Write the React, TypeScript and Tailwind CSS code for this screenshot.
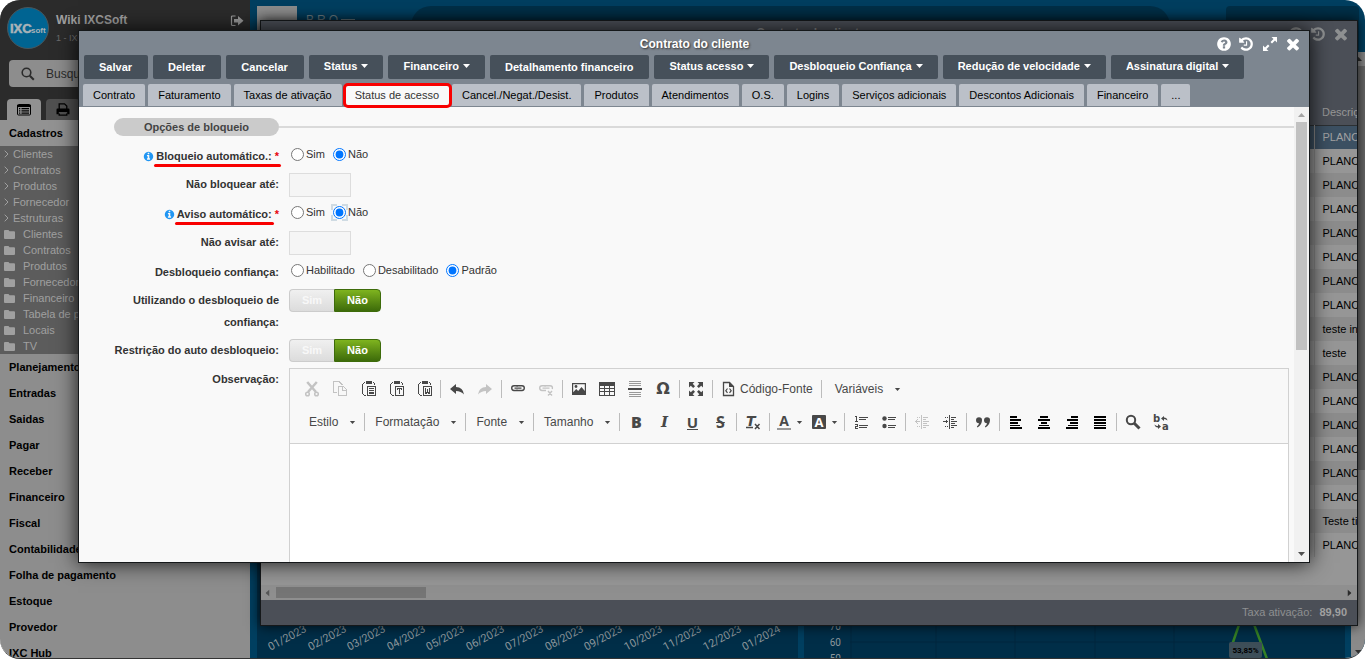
import React from "react";

type Kids = { children?: React.ReactNode };

const FA = {
  question:
    "M1024 1376v-192q0-14-9-23t-23-9h-192q-14 0-23 9t-9 23v192q0 14 9 23t23 9h192q14 0 23-9t9-23zm256-672q0-88-55.5-163t-138.5-116-170-41q-243 0-371 213-15 24 8 42l132 100q7 6 19 6 16 0 25-12 53-68 86-92 34-24 86-24 48 0 85.5 26t37.5 59q0 38-20 61t-68 45q-63 28-115.5 86.5t-52.5 125.5v36q0 14 9 23t23 9h192q14 0 23-9t9-23q0-19 21.5-49.5t54.5-49.5q32-18 49-28.5t46-35 44.5-48 28-60.5 12.5-81zm384 192q0 209-103 385.5t-279.5 279.5-385.5 103-385.5-103-279.5-279.5-103-385.5 103-385.5 279.5-279.5 385.5-103 385.5 103 279.5 279.5 103 385.5z",
  history:
    "M1664 896q0 156-61 298t-164 245-245 164-298 61q-172 0-327-72.5t-264-204.5q-7-10-6.5-22.5t8.5-20.5l137-138q10-9 25-9 16 2 23 12 73 95 179 147t225 52q104 0 198.5-40.5t163.5-109.5 109.5-163.5 40.5-198.5-40.5-198.5-109.5-163.5-163.5-109.5-198.5-40.5q-98 0-188 35.5t-160 101.5l137 138q31 30 14 69-17 40-59 40h-448q-26 0-45-19t-19-45v-448q0-42 40-59 39-17 69 14l130 129q107-101 244.5-156.5t284.5-55.5q156 0 298 61t245 164 164 245 61 298zm-640-288v448q0 14-9 23t-23 9h-320q-14 0-23-9t-9-23v-64q0-14 9-23t23-9h224v-352q0-14 9-23t23-9h64q14 0 23 9t9 23z",
  times:
    "M1490 1322q0 40-28 68l-136 136q-28 28-68 28t-68-28l-294-294-294 294q-28 28-68 28t-68-28l-136-136q-28-28-28-68t28-68l294-294-294-294q-28-28-28-68t28-68l136-136q28-28 68-28t68 28l294 294 294-294q28-28 68-28t68 28l136 136q28 28 28 68t-28 68l-294 294 294 294q28 28 28 68z",
  info:
    "M1152 1376v-160q0-14-9-23t-23-9h-96v-512q0-14-9-23t-23-9h-320q-14 0-23 9t-9 23v160q0 14 9 23t23 9h96v320h-96q-14 0-23 9t-9 23v160q0 14 9 23t23 9h448q14 0 23-9t9-23zm-128-896v-160q0-14-9-23t-23-9h-192q-14 0-23 9t-9 23v160q0 14 9 23t23 9h192q14 0 23-9t9-23zm640 416q0 209-103 385.5t-279.5 279.5-385.5 103-385.5-103-279.5-279.5-103-385.5 103-385.5 279.5-279.5 385.5-103 385.5 103 279.5 279.5 103 385.5z",
};

function Fa({ d, className }: { d: string; className: string }) {
  return (
    <svg viewBox="0 0 1792 1792" fill="currentColor" className={className} aria-hidden="true">
      <path d={d} />
    </svg>
  );
}

function WindowControls({ expand }: { expand?: boolean }) {
  return (
    <div className="flex items-center gap-1.5">
      <button type="button" aria-label="Ajuda"><Fa d={FA.question} className="h-4 w-4" /></button>
      <button type="button" aria-label="Histórico"><Fa d={FA.history} className="h-4 w-4" /></button>
      {expand && (
        <button type="button" aria-label="Expandir" className="ml-0.5">
          <svg viewBox="0 0 16 16" className="h-4 w-4" fill="currentColor" aria-hidden="true">
            <path d="M9.500 1h5.500v5.500l-2-2-3 3-1.500-1.500 3-3zM6.500 15h-5.500v-5.500l2 2 3-3 1.500 1.500-3 3z" />
          </svg>
        </button>
      )}
      <button type="button" aria-label="Fechar"><Fa d={FA.times} className="h-[18px] w-[18px]" /></button>
    </div>
  );
}

function Caret({ className = "" }: { className?: string }) {
  return (
    <svg viewBox="0 0 7 4" className={`h-1 w-[7px] ${className}`} fill="currentColor" aria-hidden="true">
      <path d="M0 0h7L3.500 4z" />
    </svg>
  );
}

/* ---------- Sidebar ---------- */

const shortcuts = ["Clientes", "Contratos", "Produtos", "Fornecedor", "Estruturas"];
const folders = ["Clientes", "Contratos", "Produtos", "Fornecedor", "Financeiro", "Tabela de preço", "Locais", "TV"];
const sections = [
  "Planejamento", "Entradas", "Saidas", "Pagar", "Receber", "Financeiro", "Fiscal",
  "Contabilidade", "Folha de pagamento", "Estoque", "Provedor", "IXC Hub",
];

function Sidebar() {
  return (
    <aside className="flex w-[250px] shrink-0 flex-col overflow-hidden bg-[#8d8d8d]">
      <div className="bg-[#2b2b2b]">
        <div className="flex h-[60px] pt-[7px] pl-[7px]">
          <svg viewBox="0 0 42 42" className="h-[42px] w-[42px] shrink-0" role="img" aria-label="IXC Soft">
            <circle cx="21" cy="21" r="20.500" fill="#006492" stroke="#4a565c" />
            <text x="3" y="26" fontFamily="Liberation Sans" fontWeight="700" fontSize="13" fill="#a9b3b8" stroke="#a9b3b8" strokeWidth="0.500">IXC</text>
            <text x="24" y="26" fontFamily="Liberation Sans" fontWeight="700" fontSize="8" fill="#a9b3b8">soft</text>
          </svg>
          <div className="flex-1 pl-[7px]">
            <p className="mt-[5px] text-[12px] leading-4 font-bold text-[#a0a0a0]">Wiki IXCSoft</p>
            <p className="mt-1 text-[9px] leading-3 text-[#6c6c6c]">1 - IXCSoft</p>
          </div>
          <button type="button" aria-label="Sair" className="mt-[7px] mr-1.5 h-3.5 text-[#9a9a9a]">
            <svg viewBox="0 0 14 14" className="h-3.5 w-3.5" aria-hidden="true">
              <path d="M5.500 2H2.500Q1.500 2 1.500 3v7.500q0 1 1 1h3" fill="none" stroke="currentColor" strokeWidth="1.200" />
              <path d="M4 5h4V2l5.500 4.800L8 11.500v-3H4z" fill="currentColor" />
            </svg>
          </button>
        </div>
        <div className="mx-[9px] flex h-[27px] items-center rounded bg-[#8d8d8d] pl-3">
          <svg viewBox="0 0 14 14" className="h-3.5 w-3.5" fill="none" stroke="#2b2b2b" aria-hidden="true">
            <circle cx="5.500" cy="5.500" r="4.300" strokeWidth="1.600" />
            <path d="M8.800 8.800l4 4" strokeWidth="2" />
          </svg>
          <input aria-label="Buscar" placeholder="Busque" className="ml-[11px] w-32 bg-transparent text-[12px] leading-4 outline-none placeholder:text-[#2b2b2b]" />
        </div>
        <div className="flex gap-[5px] pt-3 pl-[7px]">
          <button type="button" aria-label="Menu" className="flex h-[21px] w-[34px] items-center justify-center rounded-t-sm bg-[#919191] text-black">
            <svg viewBox="0 0 14 12" className="h-3 w-3.5" aria-hidden="true">
              <rect x=".5" y=".5" width="13" height="10.500" rx="1" fill="none" stroke="currentColor" />
              <path d="M0 1h14v2H0zM2 4h1.300v1.200H2zM4.500 4H12v1.200H4.500zM2 6.300h1.300v1.200H2zM4.500 6.300H12v1.200H4.500zM2 8.500h1.300v1.200H2zM4.500 8.500H12v1.200H4.500z" fill="currentColor" />
            </svg>
          </button>
          <button type="button" aria-label="Imprimir" className="flex h-[21px] w-[34px] items-center justify-center rounded-t-sm bg-[#505050] text-black">
            <svg viewBox="0 0 14 13" className="h-[13px] w-3.5" aria-hidden="true">
              <path d="M3.200 6V.8h5.300l2.300 2.300V6M3.200 10.500v1.700h7.600v-1.700" fill="none" stroke="currentColor" strokeWidth="1.300" />
              <path d="M1.500 5.500h11q1 0 1 1.200v4.600h-2.300V9H2.800v2.300H.5V6.700q0-1.200 1-1.200z" fill="currentColor" />
            </svg>
          </button>
        </div>
      </div>
      <h2 className="h-[26px] shrink-0 bg-[#929292] pl-[9px] text-[11px] leading-[26px] font-bold text-black">Cadastros</h2>
      <ul className="shrink-0 bg-[#5c5c5c] text-[11px] leading-4 text-[#a0a0a0]">
        {shortcuts.map((s) => (
          <li key={s} className="flex items-center">
            <svg viewBox="0 0 5 8" className="ml-1 h-2 w-[5px]" fill="none" stroke="currentColor" aria-hidden="true">
              <path d="M.7.7L4 4 .7 7.300" />
            </svg>
            <a href="#" className="ml-1">{s}</a>
          </li>
        ))}
        {folders.map((s) => (
          <li key={s} className="flex items-center">
            <svg viewBox="0 0 11 9" className="ml-1 h-[9px] w-[11px] shrink-0" fill="currentColor" aria-hidden="true">
              <path d="M0 1q0-1 1-1h3.500l1 1.300H10q1 0 1 1V8q0 1-1 1H1Q0 9 0 8z" />
            </svg>
            <a href="#" className="ml-2 whitespace-nowrap">{s}</a>
          </li>
        ))}
      </ul>
      <ul className="text-[11px] leading-[26px] font-bold text-black">
        {sections.map((s) => (
          <li key={s} className="pl-[9px]"><a href="#">{s}</a></li>
        ))}
      </ul>
    </aside>
  );
}

/* ---------- Dashboard behind the windows ---------- */

const months = ["01/2023", "02/2023", "03/2023", "04/2023", "05/2023", "06/2023", "07/2023", "08/2023", "09/2023", "10/2023", "11/2023", "12/2023", "01/2024"];

function Dashboard() {
  return (
    <main className="flex min-w-0 flex-1 flex-col bg-[#003f60]">
      <div className="flex h-[52px] shrink-0 items-start pt-1.5 pr-1.5 pl-[7px]">
        <div className="h-8 w-10 bg-[#8d8d8d]" />
        <div className="ml-[9px] flex w-[105px] pt-1.5 text-[12px] leading-4 tracking-[3px] text-[#6f8088]">
          <span>BRO</span>
          <span className="mt-[7px] h-px w-3.5 bg-[#6f8088]" />
        </div>
        <div className="h-11 min-w-0 flex-[7] rounded-t-[20px] bg-[#002f47]" />
        <div className="ml-14 h-11 w-[133px] rounded-t bg-[#002f47]" />
      </div>
      <div className="flex min-h-0 flex-1">
        <div className="grid min-w-0 flex-1 grid-cols-2 gap-1.5 pr-1.5 pl-[7px]">
          <section className="flex flex-col justify-end bg-[#002e48]">
            <div className="grid h-[26px] grid-cols-13 pr-3.5 pl-[13px] text-[#8d979c]">
              {months.map((m) => (
                <span key={m} className="-rotate-[28deg] font-[Roboto] text-[11px] leading-3 whitespace-nowrap">{m}</span>
              ))}
            </div>
          </section>
          <section className="flex min-w-0 items-end overflow-hidden bg-[#002e48]">
            <div className="-mb-[9px] w-[46px] pr-[9px] text-right font-[Roboto] text-[10px] leading-4 text-[#8d979c]">
              <p>70</p>
              <p>60</p>
              <p>50</p>
            </div>
            <svg className="h-9 min-w-0 flex-1" aria-hidden="true">
              <path d="M0 20H600M1 0V36M86 0V36M165 0V36M245 0V36M324 0V36M404 0V36" stroke="#00273e" fill="none" />
            </svg>
            <svg viewBox="0 0 116 36" className="h-9 w-[116px]" aria-hidden="true">
              <path d="M2 26L12 -3M23 -3L38 37" stroke="#358025" strokeWidth="2.500" fill="none" />
              <rect x="0" y="20" width="33" height="16" rx="2" fill="#3d4e58" />
              <text x="16.500" y="31" textAnchor="middle" fontFamily="Roboto" fontSize="8" fontWeight="700" fill="#000">53,85%</text>
            </svg>
          </section>
        </div>
        <div className="flex w-3.5 flex-col items-center bg-[#8a8a8a] text-[#2e2e2e]" aria-hidden="true">
          <Caret className="my-[5px] rotate-180" />
          <div className="h-2/3 w-full bg-[#6a6a6a]" />
          <Caret className="mt-auto mb-1" />
        </div>
      </div>
    </main>
  );
}

const plans = [
  "PLANO", "PLANO", "PLANO", "PLANO", "PLANO", "PLANO", "PLANO", "PLANO", "teste internet", "teste",
  "PLANO", "PLANO", "PLANO", "PLANO", "PLANO", "PLANO", "Teste tipo", "PLANO",
];

function ContractListWindow() {
  return (
    <section className="absolute top-5 right-[7px] bottom-8 left-[260px] flex flex-col border border-[#15181a] bg-[#969696] shadow-[0_0_12px_rgba(0,0,0,0.8)]">
      <div className="flex h-[79px] shrink-0 items-start bg-[#4b4f57] pt-1 pr-[7px] text-[#8e9091]">
        <h2 className="ml-[73px] flex-1 text-center text-[12px] leading-4 font-bold">Contrato do cliente</h2>
        <WindowControls />
      </div>
      <div className="min-h-0 flex-1 overflow-hidden">
        <table className="w-full table-fixed border-collapse text-[11px]">
          <colgroup>
            <col />
            <col className="w-[43px]" />
          </colgroup>
          <thead>
            <tr className="h-[25px] border-b border-[#2c3033] bg-[#4b4f57] text-left text-[#989898]">
              <th />
              <th className="overflow-hidden pl-2 font-normal whitespace-nowrap">Descrição</th>
            </tr>
          </thead>
          <tbody>
            {plans.map((p, i) => (
              <tr key={i} className={`h-6 ${i === 0 ? "bg-[#3c5062] text-[#a2a2a2]" : i % 2 ? "bg-[#969696] text-black" : "bg-[#8c8c8c] text-black"}`}>
                <td className="border-r border-[#858585]" />
                <td className="overflow-hidden pl-2 whitespace-nowrap">{p}</td>
              </tr>
            ))}
          </tbody>
        </table>
      </div>
      <div className="flex h-[15px] shrink-0 items-center bg-[#8f8f8f] pr-1 pl-[3px] text-[#2c2c2c]" aria-hidden="true">
        <Caret className="rotate-90 text-[#555]" />
        <div className="ml-[5px] h-[11px] w-[150px] bg-[#757575]" />
        <Caret className="ml-auto -rotate-90" />
      </div>
      <p className="h-[25px] shrink-0 bg-[#4b4f57] pr-2.5 text-right text-[11px] leading-6 text-[#8e9091]">
        Taxa ativação: <b className="ml-1 text-[#a0a0a0]">89,90</b>
      </p>
    </section>
  );
}

/* ---------- Contract window ---------- */

const actions: [string, boolean][] = [
  ["Salvar", false], ["Deletar", false], ["Cancelar", false], ["Status", true], ["Financeiro", true],
  ["Detalhamento financeiro", false], ["Status acesso", true], ["Desbloqueio Confiança", true],
  ["Redução de velocidade", true], ["Assinatura digital", true],
];
const tabs = [
  "Contrato", "Faturamento", "Taxas de ativação", "Status de acesso", "Cancel./Negat./Desist.", "Produtos",
  "Atendimentos", "O.S.", "Logins", "Serviços adicionais", "Descontos Adicionais", "Financeiro", "...",
];

function FieldRow({ label, htmlFor, nudge, children }: Kids & { label: React.ReactNode; htmlFor?: string; nudge?: boolean }) {
  return (
    <div className="mb-1.5 flex min-h-[23px] items-start gap-2.5">
      <label htmlFor={htmlFor} className={`w-[170px] shrink-0 text-right text-[11px] leading-[22px] font-bold text-[#333] ${nudge ? "pt-px" : ""}`}>
        {label}
      </label>
      {children}
    </div>
  );
}

function Radios({ name, options, selected, focused }: { name: string; options: string[]; selected: string; focused?: boolean }) {
  return (
    <div role="radiogroup" className="flex h-5 items-center gap-2 pl-0.5 text-[11px] leading-4 text-[#333]">
      {options.map((o) => (
        <label key={o} className="relative flex items-center gap-0.5">
          <input type="radio" name={name} defaultChecked={o === selected} className="m-0 h-[13px] w-[13px]" />
          {focused && o === selected && (
            <svg viewBox="0 0 17 17" className="absolute top-0 -left-0.5 h-[17px] w-[17px]" fill="none" stroke="#cfdbe3" strokeWidth="2" aria-hidden="true">
              <path d="M1 6V1H6M11 1h5v5M16 11v5h-5M6 16H1v-5" />
            </svg>
          )}
          {o}
        </label>
      ))}
    </div>
  );
}

function Toggle({ name }: { name: string }) {
  return (
    <div role="group" aria-label={name} className="flex h-[23px] text-[11px] font-bold">
      <button type="button" className="w-[45px] rounded-l-sm border border-r-0 border-[#ccc] bg-linear-to-b from-[#f0f0f0] to-[#dcdcdc] text-[#f8f8f8]">Sim</button>
      <button type="button" className="w-[47px] rounded-r-sm border border-[#3d6b0a] bg-linear-to-b from-[#7fb41f] to-[#3d6b0a] text-white">Não</button>
    </div>
  );
}

function HelpLabel({ text, underlineStar }: { text: string; underlineStar?: boolean }) {
  const bar = <span className="absolute -right-0.5 -bottom-1 -left-0.5 h-[3px] rounded-full bg-[#f80000]" />;
  return (
    <span className="flex h-[22px] items-center justify-end leading-[14px]">
      <Fa d={FA.info} className="mr-0.5 h-[11px] w-[11px] text-[#2196f3]" />
      <span className="relative flex">
        <span className="relative">{text}{!underlineStar && bar}</span>
        <span className="ml-[3px] text-red-600">*</span>
        {underlineStar && bar}
      </span>
    </span>
  );
}

/* ---------- Rich text editor ---------- */

function Ico({ children, soft }: Kids & { soft?: boolean }) {
  return (
    <svg viewBox="0 0 16 16" className="h-4 w-4" fill="currentColor" shapeRendering={soft ? "auto" : "crispEdges"} aria-hidden="true">
      {children}
    </svg>
  );
}

function Tool({ name, off, dark, wide, children }: Kids & { name: string; off?: boolean; dark?: boolean; wide?: boolean }) {
  return (
    <button type="button" aria-label={name} disabled={off} className={`flex h-7 shrink-0 items-center justify-center ${wide ? "w-[35px] gap-1" : "w-7"} ${off ? "text-[#c3c3c3]" : dark ? "text-black" : "text-[#484848]"}`}>
      {children}
    </button>
  );
}

function Sep() {
  return <span className="mx-0.5 h-[18px] w-px shrink-0 bg-[#bcbcbc]" />;
}

function Combo({ label }: { label: string }) {
  return (
    <button type="button" className="flex h-7 items-center gap-[11px] pr-1.5 pl-2 text-[12px] text-[#484848]">
      {label}
      <Caret className="h-[3px]" />
    </button>
  );
}

const clip = "M6 0h6v3H6zM4 1h1v1H4zM3 2h1v1H3zM2 3h1v10H2zM3 13h1v1H3zM4 14h2v1H4zM13 1h1v1h-1zM14 2h1v2h-1zM7 5h9v10H7zM8 6v8h7V6z";

function Toolbar() {
  return (
    <div className="border-b border-[#d1d1d1] bg-[#f8f8f8] pt-1.5 pb-[7px] pl-2">
      <div className="flex items-center">
        <Tool name="Recortar" off>
          <Ico soft>
            <path d="M3.200 1L12 11M12.800 1L4 11" stroke="currentColor" strokeWidth="2.500" fill="none" />
            <circle cx="3.500" cy="13" r="1.800" fill="none" stroke="currentColor" strokeWidth="1.500" />
            <circle cx="12.500" cy="13" r="1.800" fill="none" stroke="currentColor" strokeWidth="1.500" />
          </Ico>
        </Tool>
        <Tool name="Copiar" off>
          <Ico>
            <path d="M5 11.500H1.500V.5H7L10.500 4" fill="none" stroke="currentColor" />
            <path d="M6.500 5.500h5l3 3v6h-8zM10.500 5.500v4h4" fill="none" stroke="currentColor" />
          </Ico>
        </Tool>
        <Tool name="Colar">
          <Ico><path fillRule="evenodd" d={clip} /><path d="M9 7h5v1H9zM9 9h5v1H9zM9 11h5v1H9zM9 12h5v1H9z" /></Ico>
        </Tool>
        <Tool name="Colar como texto">
          <Ico><path fillRule="evenodd" d={clip} /><path d="M9 7h5v2h-1V8h-1v5h-1V8h-1v1H9z" /></Ico>
        </Tool>
        <Tool name="Colar do Word">
          <Ico><path fillRule="evenodd" d={clip} /><path d="M9 7h1v4h1V8h1v3h1V7h1v6h-2v-1h-1v1H9z" /></Ico>
        </Tool>
        <Sep />
        <Tool name="Desfazer">
          <Ico soft><path d="M7 3v3q7 .2 8 7.500Q12 10 7 10v3L1 8z" /></Ico>
        </Tool>
        <Tool name="Refazer" off>
          <Ico soft><path d="M9 3v3q-7 .2-8 7.500Q4 10 9 10v3l6-5z" /></Ico>
        </Tool>
        <Sep />
        <Tool name="Link">
          <Ico soft>
            <path d="M9 5.500V5Q9 4.700 8 4.700H4Q1.700 4.700 1.700 7T4 9.500h4q1 0 1-.8M7 8.500V9q0 .5 1 .5h4q2.300 0 2.300-2.400T12 4.700H8q-1 0-1 1M4.500 7.100h7" fill="none" stroke="currentColor" strokeWidth="1.400" />
          </Ico>
        </Tool>
        <Tool name="Remover link" off>
          <Ico soft>
            <path d="M9 5.500V5Q9 4.700 8 4.700H4Q1.700 4.700 1.700 7T4 9.500h4M14.300 8q.6-3.300-2.300-3.300H8q-1 0-1 1M4.500 7.100h7M10 10l4 4.500M14 10l-4 4.500" fill="none" stroke="currentColor" strokeWidth="1.400" />
          </Ico>
        </Tool>
        <Sep />
        <Tool name="Imagem">
          <Ico soft><path fillRule="evenodd" d="M1 2h14v12H1zM2.200 3.200v8l3-3.200 2 2 3.300-4 3.300 4V3.200z" /><circle cx="5" cy="5.500" r="1.400" /></Ico>
        </Tool>
        <Tool name="Tabela">
          <Ico><path fillRule="evenodd" d="M0 1h16v14H0zM1 5v2h4V5zM6 5v2h4V5zM11 5v2h4V5zM1 8v2h4V8zM6 8v2h4V8zM11 8v2h4V8zM1 11v3h4v-3zM6 11v3h4v-3zM11 11v3h4v-3z" /></Ico>
        </Tool>
        <Tool name="Linha horizontal">
          <Ico><path d="M2 0h12v1H2zM2 2h12v1H2zM2 4h12v1H2zM2 11h12v1H2zM2 13h12v1H2zM2 15h12v1H2z" fill="#999" /><path d="M1 7h14v2H1z" /></Ico>
        </Tool>
        <Tool name="Caractere especial"><span className="font-['DejaVu_Sans'] text-[16px] leading-4 font-bold">Ω</span></Tool>
        <Sep />
        <Tool name="Maximizar">
          <Ico soft>
            <path d="M1 1h5.500L4.700 2.800 7 5.200 5.200 7 2.800 4.700 1 6.500zM15 1v5.500l-1.800-1.800L10.800 7 9 5.200l2.300-2.400L9.500 1zM1 15V9.500l1.800 1.800L5.200 9 7 10.800l-2.300 2.400L6.500 15zM15 15H9.500l1.800-1.800L9 10.800 10.800 9l2.400 2.300L15 9.500z" />
          </Ico>
        </Tool>
        <Sep />
        <button type="button" className="flex h-7 items-center gap-1 pr-1.5 pl-[5px] text-[12px] text-[#484848]">
          <Ico soft>
            <path d="M3.500 1.500h6l4 4v9H3.500z" fill="none" stroke="currentColor" strokeWidth="1.300" />
            <path d="M9 1v5h5z" />
            <path d="M7.500 7.500L5.800 9.700l1.700 2.200M9.500 7.500l1.700 2.200-1.700 2.200" fill="none" stroke="currentColor" strokeWidth="1.200" />
          </Ico>
          Código-Fonte
        </button>
        <Sep />
        <span className="w-[3px]" />
        <Combo label="Variáveis" />
      </div>
      <div className="mt-[5px] flex items-center pl-[3px]">
        <Combo label="Estilo" /><Sep />
        <Combo label="Formatação" /><Sep />
        <Combo label="Fonte" /><Sep />
        <Combo label="Tamanho" /><Sep />
        <Tool name="Negrito"><span className="font-['Open_Sans'] text-[16px] font-extrabold">B</span></Tool>
        <Tool name="Itálico"><span className="font-['DejaVu_Serif'] text-[15px] font-bold italic">I</span></Tool>
        <Tool name="Sublinhado"><span className="border-b border-current font-['Open_Sans'] text-[15px] leading-[14px] font-bold">U</span></Tool>
        <Tool name="Tachado"><span className="font-['Open_Sans'] text-[16px] font-bold line-through">S</span></Tool>
        <Sep />
        <Tool name="Remover formatação">
          <Ico soft>
            <text x="1" y="12" fontFamily="DejaVu Sans" fontWeight="700" fontStyle="italic" fontSize="14">T</text>
            <path d="M1 13.500h7M10 10l4.500 5M14.500 10L10 15" stroke="currentColor" strokeWidth="1.500" />
          </Ico>
        </Tool>
        <Sep />
        <Tool name="Cor do texto" wide>
          <Ico soft><text x="8" y="11.500" textAnchor="middle" fontFamily="Open Sans" fontWeight="700" fontSize="14">A</text><path d="M1 14h14v2H1z" fill="#999" /></Ico>
          <Caret className="h-[3px]" />
        </Tool>
        <Tool name="Cor de fundo" wide>
          <Ico soft><rect x="1" y="1" width="14" height="14" rx="1" /><text x="8" y="12.500" textAnchor="middle" fontFamily="Open Sans" fontWeight="700" fontSize="13" fill="#fff">A</text></Ico>
          <Caret className="h-[3px]" />
        </Tool>
        <Sep />
        <Tool name="Lista numerada">
          <Ico>
            <path d="M6 3h9v1H6zM6 5h7v1H6zM6 11h9v1H6zM6 13h8v1H6z" />
            <path d="M2 2h2v5h1v1H2V7h1V3H2zM2 10h3v3H3v1h2v1H2v-3h2v-1H2z" />
          </Ico>
        </Tool>
        <Tool name="Lista com marcadores">
          <Ico soft><circle cx="3.500" cy="4.500" r="2.200" /><circle cx="3.500" cy="12" r="2.200" /><path d="M7 3h8v1H7zM7 5h7v1H7zM7 11h8v1H7zM7 13h7v1H7z" /></Ico>
        </Tool>
        <Sep />
        <Tool name="Diminuir recuo" off>
          <Ico>
            <path d="M7 1h1v14H7zM9 3h5v1H9zM9 5h3v1H9zM9 7h6v1H9zM9 9h4v1H9zM9 11h6v1H9zM9 13h3v1H9zM1 7h5v1H1zM2 6h1v3H2zM3 5h1v1H3zM3 9h1v1H3zM3 3h1v1H3zM5 3h1v1H5zM3 12h1v1H3zM5 12h1v1H5z" />
          </Ico>
        </Tool>
        <Tool name="Aumentar recuo">
          <Ico>
            <path d="M7 1h1v14H7zM9 3h5v1H9zM9 5h3v1H9zM9 7h6v1H9zM9 9h4v1H9zM9 11h6v1H9zM9 13h3v1H9zM1 7h5v1H1zM4 6h1v3H4zM3 3h1v1H3zM5 3h1v1H5zM3 12h1v1H3zM5 12h1v1H5z" />
          </Ico>
        </Tool>
        <Sep />
        <Tool name="Citação">
          <Ico soft>
            <path d="M7 6q0 5-4.500 7.500l-.6-1Q4 10.800 4 9.300 1 9 1 6.200 1 3.300 4 3.300 7 3.300 7 6zM15 6q0 5-4.500 7.500l-.6-1Q12 10.800 12 9.300 9 9 9 6.200 9 3.300 12 3.300 15 3.300 15 6z" />
          </Ico>
        </Tool>
        <Sep />
        <Tool name="Alinhar à esquerda" dark><Ico><path d="M2 2h7v2H2zM2 5h11v2H2zM2 8h8v2H2zM2 10h8v1H2zM2 11h9v1H2zM2 13h12v1H2z" fill="none" /><path d="M2 2h7v2H2zM2 5h11v2H2zM2 8h8v2H2zM2 11h10v1H2zM2 13h12v2H2z" /></Ico></Tool>
        <Tool name="Centralizar" dark><Ico><path d="M4 2h8v2H4zM2 5h12v2H2zM5 8h6v2H5zM3 11h10v1H3zM2 13h12v2H2z" /></Ico></Tool>
        <Tool name="Alinhar à direita" dark><Ico><path d="M7 2h7v2H7zM3 5h11v2H3zM6 8h8v2H6zM4 11h10v1H4zM2 13h12v2H2z" /></Ico></Tool>
        <Tool name="Justificar" dark><Ico><path d="M2 2h12v2H2zM2 5h12v2H2zM2 8h12v2H2zM2 11h12v1H2zM2 13h12v2H2z" /></Ico></Tool>
        <Sep />
        <Tool name="Localizar">
          <Ico soft>
            <circle cx="6" cy="6" r="4.200" fill="none" stroke="currentColor" strokeWidth="2" />
            <path d="M9 9l5.500 5.500" stroke="currentColor" strokeWidth="3" />
          </Ico>
        </Tool>
        <Tool name="Substituir">
          <Ico soft>
            <text x="0" y="8" fontFamily="DejaVu Sans" fontWeight="700" fontSize="10">b</text>
            <text x="9" y="16" fontFamily="DejaVu Sans" fontWeight="700" fontSize="10">a</text>
            <path d="M8 4.500l3-2.500v1.500q3 0 3.500 3-1.500-1.500-3.500-1.500v2zM8 12.500L5 15v-1.500q-3 0-3.500-3Q3 12 5 12v-2z" />
          </Ico>
        </Tool>
      </div>
    </div>
  );
}

function ContractWindow() {
  return (
    <section role="dialog" aria-label="Contrato do cliente" className="absolute top-[30px] right-[55px] bottom-[95px] left-[78px] flex flex-col border border-[#15181a] bg-[#f9f9f9] shadow-[0_0_20px_rgba(0,0,0,0.85)]">
      <header className="shrink-0 bg-[#7d8690] pb-px">
        <div className="flex h-6 items-center pt-0.5 pr-[7px] text-white">
          <h1 className="ml-[94px] flex-1 text-center text-[12px] leading-4 font-bold [text-shadow:1px_1px_2px_#333]">Contrato do cliente</h1>
          <WindowControls expand />
        </div>
        <div className="flex gap-[5px] pl-[5px]">
          {actions.map(([label, menu]) => (
            <button key={label} type="button" className={`flex h-6 shrink-0 items-center gap-1 rounded-xs bg-[#46505a] pl-[15px] text-[11px] font-bold whitespace-nowrap text-white ${menu ? "pr-[15px] pb-0.5" : "pr-4"}`}>
              {label}
              {menu && <Caret />}
            </button>
          ))}
        </div>
        <nav className="mt-[5px] flex gap-[3px] pl-1">
          {tabs.map((t) => {
            const active = t === "Status de acesso";
            return (
              <button key={t} type="button" className={`relative h-[22px] shrink-0 rounded-t-xs px-2.5 text-[11px] whitespace-nowrap ${active ? "bg-[#f9f9f9] text-[#333]" : "bg-[#bbc0c8] text-black"}`}>
                {t}
                {active && <span className="absolute -top-px -right-[3px] -bottom-0.5 -left-0.5 z-10 rounded-[5px] border-3 border-[#f80000]" />}
              </button>
            );
          })}
        </nav>
      </header>
      <div className="flex min-h-0 flex-1">
        <div className="min-w-0 flex-1 overflow-hidden pt-[11px]">
          <div className="mb-2 flex items-center pl-[35px]">
            <h3 className="h-[18px] w-[165px] rounded-full bg-[#cbcbcb] text-center text-[11px] leading-[18px] font-bold text-[#444]">Opções de bloqueio</h3>
            <div className="h-0.5 flex-1 bg-[#dadada]" />
          </div>
          <form className="pr-[5px] pl-[30px]">
            <FieldRow nudge label={<HelpLabel text="Bloqueio automático.:" underlineStar />}>
              <Radios name="bloqueio" options={["Sim", "Não"]} selected="Não" />
            </FieldRow>
            <FieldRow label="Não bloquear até:" htmlFor="bloquear-ate">
              <input id="bloquear-ate" className="-mb-px h-6 w-[62px] border border-[#ddd] bg-[#f5f5f5]" />
            </FieldRow>
            <FieldRow nudge label={<HelpLabel text="Aviso automático:" />}>
              <Radios name="aviso" options={["Sim", "Não"]} selected="Não" focused />
            </FieldRow>
            <FieldRow label="Não avisar até:" htmlFor="avisar-ate">
              <input id="avisar-ate" className="-mb-px h-6 w-[62px] border border-[#ddd] bg-[#f5f5f5]" />
            </FieldRow>
            <FieldRow nudge label="Desbloqueio confiança:">
              <Radios name="confianca" options={["Habilitado", "Desabilitado", "Padrão"]} selected="Padrão" />
            </FieldRow>
            <FieldRow label="Utilizando o desbloqueio de confiança:">
              <Toggle name="Utilizando o desbloqueio de confiança" />
            </FieldRow>
            <FieldRow label="Restrição do auto desbloqueio:">
              <Toggle name="Restrição do auto desbloqueio" />
            </FieldRow>
            <FieldRow label="Observação:" htmlFor="observacao">
              <div className="min-w-0 flex-1 border border-[#d1d1d1] bg-white">
                <Toolbar />
                <textarea id="observacao" className="block h-52 w-full resize-none bg-white p-5 text-[13px] outline-none" />
              </div>
            </FieldRow>
          </form>
        </div>
        <div className="flex w-[15px] shrink-0 flex-col items-center bg-[#f1f1f1]" aria-hidden="true">
          <Caret className="mt-1.5 mb-[5px] shrink-0 rotate-180 text-[#a3a3a3]" />
          <div className="h-1/2 w-[11px] bg-[#c1c1c1]" />
          <Caret className="mt-auto mb-1.5 shrink-0 text-[#505050]" />
        </div>
      </div>
    </section>
  );
}

export default function App() {
  return (
    <div className="relative flex h-screen overflow-hidden rounded-[20px] border-b border-[#333] font-['Liberation_Sans',Arial,sans-serif]">
      <Sidebar />
      <Dashboard />
      <ContractListWindow />
      <ContractWindow />
    </div>
  );
}
